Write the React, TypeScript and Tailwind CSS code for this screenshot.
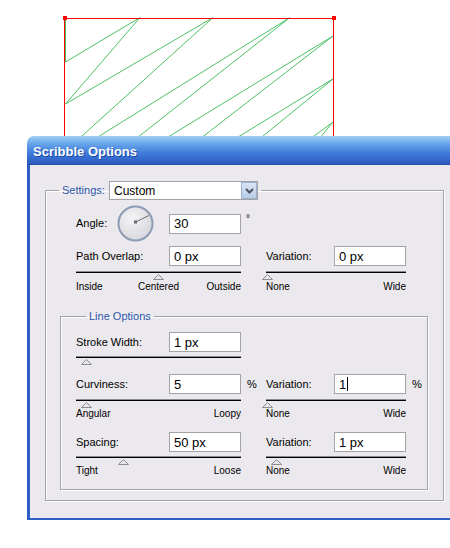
import React from "react";

const labelCls = "text-[11px] leading-[13px] text-black";

function TextBox({ value, cursor }: { value: string; cursor?: boolean }) {
  return (
    <div className="flex h-[20px] w-[72px] shrink-0 items-center border border-[#a3a3a3] bg-white pl-[4px] text-[13px] leading-none text-black">
      {value}
      {cursor && <span className="ml-px h-[14px] w-px bg-black" />}
    </div>
  );
}

function LeftField({ label, value, suffix }: { label: string; value: string; suffix?: string }) {
  return (
    <div className="flex h-[20px] w-[190px] items-center">
      <span className={`${labelCls} flex-1`}>{label}</span>
      <TextBox value={value} />
      <span className="w-[25px] pl-[6px] text-[11px] text-black">{suffix}</span>
    </div>
  );
}

function RightField({ label, value, suffix, cursor }: { label: string; value: string; suffix?: string; cursor?: boolean }) {
  return (
    <div className="flex h-[20px] w-[160px] items-center">
      <span className={`${labelCls} flex-1`}>{label}</span>
      <TextBox value={value} cursor={cursor} />
      <span className="w-[20px] pl-[6px] text-[11px] text-black">{suffix}</span>
    </div>
  );
}

function Thumb({ at }: { at: number }) {
  return (
    <svg
      width="11"
      height="6"
      viewBox="0 0 11 6"
      className="absolute top-[2px]"
      style={{ left: at - 5 }}
    >
      <polygon points="5.5,0.5 10.5,5.5 0.5,5.5" fill="#e6e5e8" stroke="#8e8e8e" strokeWidth="1" />
    </svg>
  );
}

function Track({ width, at }: { width: "left" | "right"; at: number }) {
  return (
    <div className={width === "left" ? "w-[190px]" : "w-[160px]"}>
      <div
        className={`relative h-[2px] border-t border-[#8a8a8a] bg-black ${
          width === "left" ? "w-[165px]" : "w-[140px]"
        }`}
      >
        <Thumb at={at} />
      </div>
    </div>
  );
}

function Ends({ width, items }: { width: "left" | "right"; items: string[] }) {
  return (
    <div className={width === "left" ? "w-[190px]" : "w-[160px]"}>
      <div
        className={`grid text-[10px] leading-[12px] text-black ${
          items.length === 3 ? "grid-cols-3" : "grid-cols-2"
        } ${width === "left" ? "w-[165px]" : "w-[140px]"}`}
      >
        {items.map((t, i) => (
          <span
            key={t}
            className={
              i === 0 ? "text-left" : i === items.length - 1 ? "text-right" : "text-center"
            }
          >
            {t}
          </span>
        ))}
      </div>
    </div>
  );
}

function Dial() {
  return (
    <svg width="37" height="37" viewBox="0 0 37 37" className="shrink-0">
      <defs>
        <radialGradient id="dialFill" cx="40%" cy="35%" r="70%">
          <stop offset="0%" stopColor="#f4f4f6" />
          <stop offset="100%" stopColor="#d6d5dc" />
        </radialGradient>
      </defs>
      <circle cx="18.5" cy="18.5" r="17" fill="url(#dialFill)" stroke="#8c9bb4" strokeWidth="2" />
      <line x1="18.5" y1="17" x2="32" y2="10.5" stroke="#6b6b6b" strokeWidth="1" />
      <rect x="17" y="15.5" width="3" height="3" fill="#6b6b6b" />
    </svg>
  );
}

function Scribble() {
  const green = "#4cc266";
  return (
    <svg width="450" height="150" className="absolute left-0 top-0">
      <g fill="none" stroke={green} strokeWidth="1">
        <polyline points="65.5,20 65.5,62 140,17.5 65.5,104 213,17.5 72,145" />
        <polyline points="85,145 290,17.5 128,145" />
        <polyline points="155,145 333,36 192,145" />
        <polyline points="225,145 333,79 252,145" />
        <polyline points="302,145 333,122 314,145" />
      </g>
      <rect x="64.5" y="18.5" width="269" height="140" fill="none" stroke="#ff0000" strokeWidth="1" />
      <rect x="63" y="16" width="4" height="4" fill="#ff0000" />
      <rect x="332" y="16" width="4" height="4" fill="#ff0000" />
    </svg>
  );
}

export default function App() {
  return (
    <div className="relative h-[548px] w-[450px] overflow-hidden bg-white font-['Liberation_Sans',Arial,sans-serif]">
      <Scribble />

      <div className="relative ml-[27px] mt-[136px] w-[440px] overflow-hidden rounded-t-[7px]">
        {/* Title bar */}
        <div className="flex h-[29px] items-center border-b border-[#2550b0] bg-[linear-gradient(to_bottom,#a4cff6_0%,#79b3ee_18%,#5795e4_40%,#3f7bd8_62%,#3367cb_85%,#2c59bb_100%)] pl-[6px] pt-[3px]">
          <span className="text-[13px] font-bold text-white [text-shadow:1px_1px_0_#1d4aa8]">
            Scribble Options
          </span>
        </div>

        {/* Body */}
        <div className="border-b-[2px] border-l-[3px] border-[#2d5fc4] bg-[#ebe9ed] pb-[17px] pl-[15px] pt-[16px]">
          <fieldset className="w-[399px] border border-[#a4a4a4] pb-[10px] pl-[30px] shadow-[inset_1px_1px_0_#ffffff,1px_1px_0_#ffffff]">
            <legend className="-ml-[17px] flex items-center px-[3px]">
              <span className="w-[47px] text-[11px] text-[#2c57a8]">Settings:</span>
              <div className="flex h-[19px] w-[149px] items-center border border-[#a3a3a3] bg-white">
                <span className="flex-1 pl-[4px] text-[12px] leading-none text-black">Custom</span>
                <div className="flex h-[17px] w-[16px] items-center justify-center border border-[#9db1d3] bg-[linear-gradient(to_bottom,#d8e4f4,#b9cbe6)]">
                  <svg width="9" height="6" viewBox="0 0 9 6">
                    <polyline points="1,1 4.5,4.5 8,1" fill="none" stroke="#4b5566" strokeWidth="2" />
                  </svg>
                </div>
              </div>
            </legend>

            {/* Angle */}
            <div className="mt-[5px] flex h-[37px] w-[190px] items-center">
              <span className={`${labelCls} w-[41px]`}>Angle:</span>
              <Dial />
              <span className="w-[15px]" />
              <TextBox value="30" />
              <span className="w-[25px] self-start pl-[5px] pt-[9px] text-[10px] leading-none text-black">°</span>
            </div>

            {/* Path Overlap */}
            <div className="mt-[4px] flex">
              <LeftField label="Path Overlap:" value="0 px" />
              <RightField label="Variation:" value="0 px" />
            </div>
            <div className="mt-[5px] flex">
              <Track width="left" at={82} />
              <Track width="right" at={1} />
            </div>
            <div className="mt-[8px] flex">
              <Ends width="left" items={["Inside", "Centered", "Outside"]} />
              <Ends width="right" items={["None", "Wide"]} />
            </div>

            {/* Line Options */}
            <fieldset className="-ml-[16px] mt-[17px] w-[368px] border border-[#a4a4a4] pb-[12px] pl-[15px] shadow-[inset_1px_1px_0_#ffffff,1px_1px_0_#ffffff]">
              <legend className="ml-[10px] px-[3px] text-[11px] leading-[13px] text-[#2c57a8]">
                Line Options
              </legend>

              <div className="mt-[9px] flex">
                <LeftField label="Stroke Width:" value="1 px" />
              </div>
              <div className="mt-[4px] flex">
                <Track width="left" at={10} />
              </div>

              <div className="mt-[16px] flex">
                <LeftField label="Curviness:" value="5" suffix="%" />
                <RightField label="Variation:" value="1" suffix="%" cursor />
              </div>
              <div className="mt-[5px] flex">
                <Track width="left" at={10} />
                <Track width="right" at={1} />
              </div>
              <div className="mt-[7px] flex">
                <Ends width="left" items={["Angular", "Loopy"]} />
                <Ends width="right" items={["None", "Wide"]} />
              </div>

              <div className="mt-[12px] flex">
                <LeftField label="Spacing:" value="50 px" />
                <RightField label="Variation:" value="1 px" />
              </div>
              <div className="mt-[4px] flex">
                <Track width="left" at={47} />
                <Track width="right" at={10} />
              </div>
              <div className="mt-[7px] flex">
                <Ends width="left" items={["Tight", "Loose"]} />
                <Ends width="right" items={["None", "Wide"]} />
              </div>
            </fieldset>
          </fieldset>
        </div>
      </div>
    </div>
  );
}
